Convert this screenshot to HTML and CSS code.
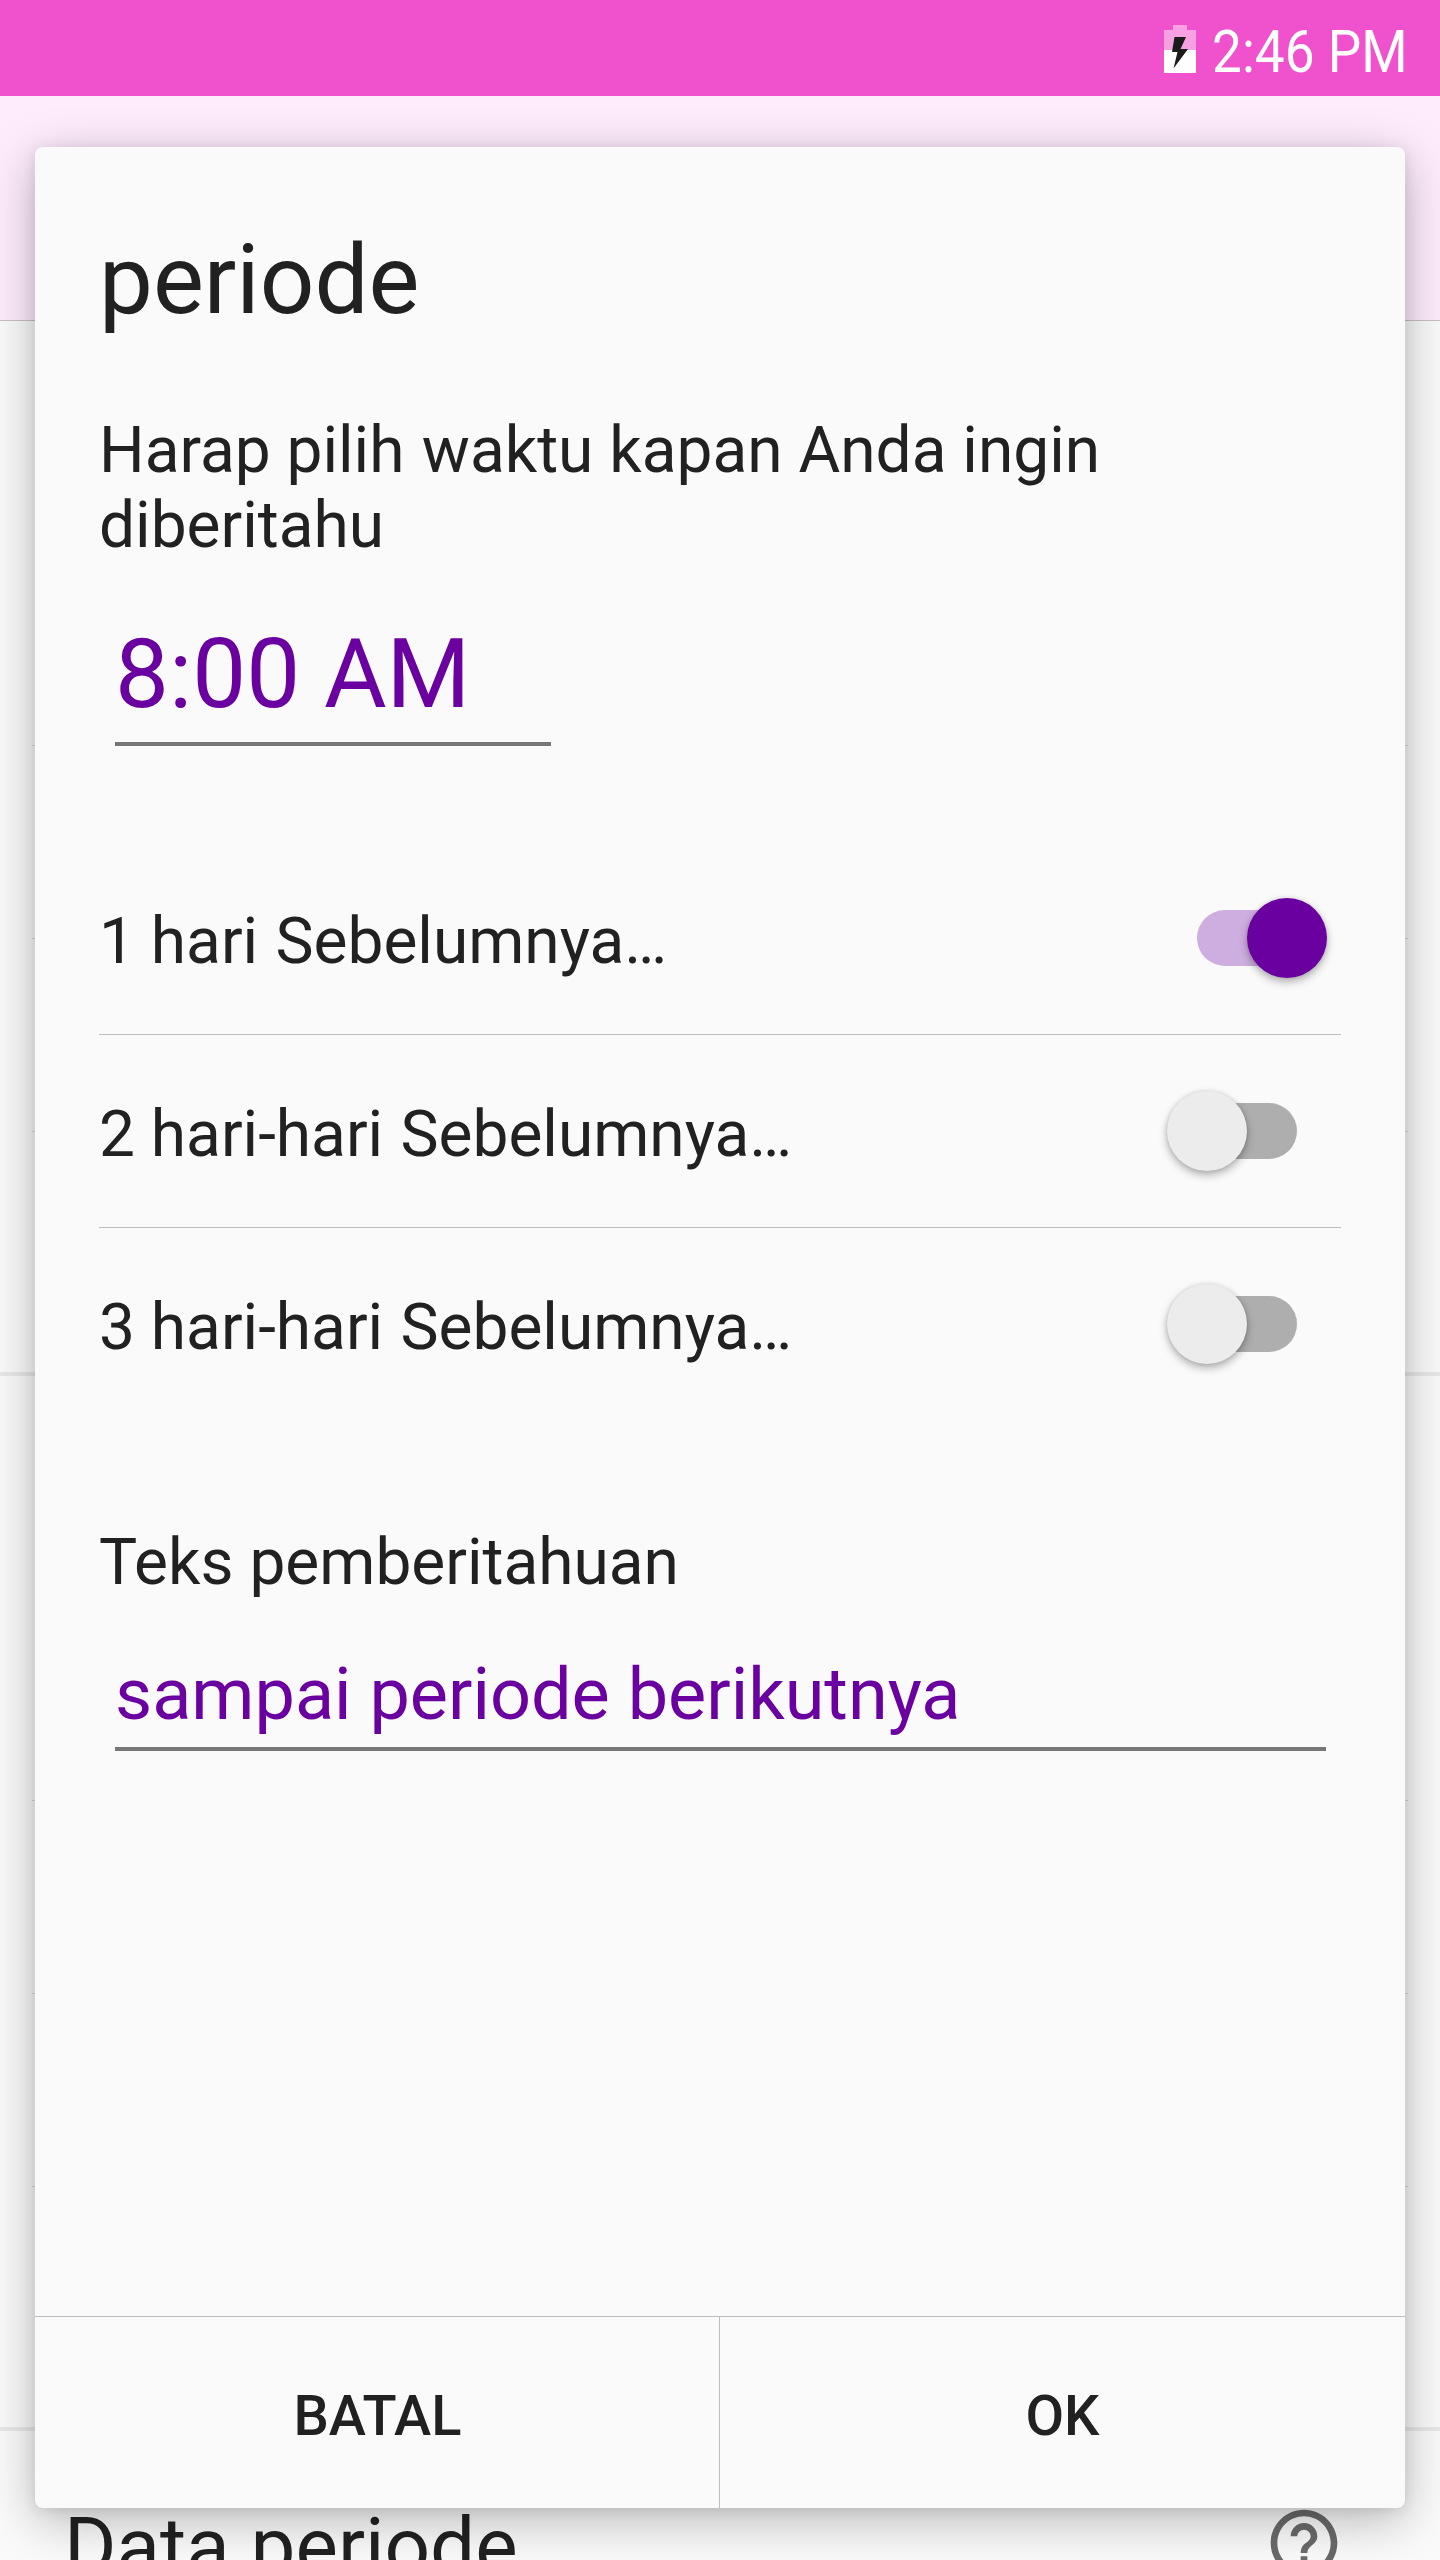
FILE: index.html
```html
<!DOCTYPE html>
<html lang="id">
<head>
<meta charset="utf-8">
<title>periode</title>
<link rel="stylesheet" href="styles.css">
</head>
<body>
<div class="screen">
  <header class="status-bar">
    <svg class="battery" width="32" height="48" viewBox="0 0 32 48">
      <path d="M9 0h14v5h9v20H0V5h9z" fill="#f7a0e2"/>
      <path d="M0 25h32v23H0z" fill="#fff"/>
      <path d="M10.500 12h11.500l-5.500 12H24L9.500 43.500l4-16.500H8z" fill="#1b1b1b"/>
    </svg>
    <span class="clock">2:46 PM</span>
  </header>
  <div class="app-bar"></div>
  <main class="page">
    <section class="group"><i></i><i></i><i></i></section>
    <section class="group"><i></i><i></i><i></i></section>
    <section class="group-data">
      <h2 class="data-title">Data periode</h2>
      <svg class="help" width="80" height="80" viewBox="0 0 24 24" fill="#6a6a6a"><path d="M11 18h2v-2h-2v2zm1-16C6.480 2 2 6.480 2 12s4.480 10 10 10 10-4.480 10-10S17.520 2 12 2zm0 18c-4.410 0-8-3.590-8-8s3.590-8 8-8 8 3.590 8 8-3.590 8-8 8zm0-14c-2.210 0-4 1.790-4 4h2c0-1.100.9-2 2-2s2 .9 2 2c0 2-3 1.750-3 5h2c0-2.250 3-2.500 3-5 0-2.210-1.790-4-4-4z"/></svg>
    </section>
  </main>
  <div class="overlay">
    <section class="dialog">
      <div class="content">
        <h1 class="title">periode</h1>
        <p class="text">Harap pilih <span class="loose">waktu</span> kapan Anda ingin diberitahu</p>
        <div class="field field-time">8:00 AM</div>
        <div class="options">
          <div class="option"><span>1 hari <span class="loose">Sebelumnya…</span></span><span class="switch on"></span></div>
          <div class="option"><span>2 hari-hari <span class="loose">Sebelumnya…</span></span><span class="switch"></span></div>
          <div class="option"><span>3 hari-hari <span class="loose">Sebelumnya…</span></span><span class="switch"></span></div>
        </div>
        <p class="text label">Teks pemberitahuan</p>
        <div class="field field-text">sampai periode berikutnya</div>
      </div>
      <footer class="actions">
        <button class="action">BATAL</button>
        <button class="action">OK</button>
      </footer>
    </section>
  </div>
</div>
</body>
</html>
```
FILE: styles.css
```css
* { box-sizing: border-box; margin: 0; padding: 0; }
body { font-family: Roboto, sans-serif; color: #212121; background: #fafafa; }
.screen { position: relative; width: 1440px; height: 2560px; overflow: hidden; display: flex; flex-direction: column; background: #fafafa; }
.status-bar { flex: none; position: relative; z-index: 2; height: 96px; background: #f052ce; display: flex; justify-content: flex-end; align-items: flex-start; padding-top: 25px; }
.battery { flex: none; margin-right: 16px; }
.clock { width: 228px; height: 70px; font-size: 60px; line-height: 54px; color: #fff; white-space: nowrap; transform: scaleX(.886); transform-origin: 0 0; }
.app-bar { flex: none; height: 225px; background: #feecfd; border-bottom: 1px solid #c9bec8; }
.page { flex: 1; min-height: 0; display: flex; flex-direction: column; }
.group { flex: none; height: 1055px; padding: 424px 32px 0; border-bottom: 4px solid #e8e8e8; }
.group i { display: block; height: 193px; border-top: 1px solid #d8d8d8; }
.group-data { display: flex; justify-content: space-between; padding: 72px 96px 0 64px; }
.data-title { font-size: 80px; font-weight: 400; line-height: 94px; margin-top: -3px; word-spacing: 1px; }
.overlay { position: absolute; inset: 0; padding: 147px 35px 52px; display: flex; }
.dialog { flex: 1; display: flex; flex-direction: column; background: #fafafa; border-radius: 8px; box-shadow: 0 12px 50px rgba(0,0,0,.27), 0 2px 14px rgba(0,0,0,.09); }
.content { flex: 1; padding: 77px 64px 0; }
.title { font-size: 96px; font-weight: 400; line-height: 112px; }
.text { font-size: 64px; line-height: 75px; margin-top: 77px; }
.loose { margin-left: 1.5px; }
.field { margin-left: 16px; color: #6a00a0; border-bottom: 4px solid #777; white-space: nowrap; }
.field-time { width: 436px; height: 128px; margin-top: 55px; font-size: 96px; line-height: 112px; }
.field-text { width: 1211px; height: 98px; margin-top: 53px; font-size: 72px; line-height: 84px; }
.options { margin-top: 96px; }
.option { height: 193px; display: flex; align-items: center; justify-content: space-between; border-bottom: 1px solid #bdbdbd; font-size: 64px; line-height: 75px; }
.option > span:first-child { padding-top: 6px; }
.option:last-child { border-bottom-color: transparent; }
.switch { position: relative; width: 100px; height: 56px; border-radius: 28px; background: #aeaeae; margin-right: 44px; }
.switch::after { content: ""; position: absolute; top: -12px; left: -30px; width: 80px; height: 80px; border-radius: 50%; background: #ececec; box-shadow: 0 4px 8px rgba(0,0,0,.3), 0 0 4px rgba(0,0,0,.1); }
.switch.on { background: #ceaee0; }
.switch.on::after { left: 50px; background: #6a00a0; }
.label { margin-top: 104px; }
.actions { flex: none; height: 192px; display: grid; grid-template-columns: 1fr 1fr; border-top: 1px solid #bdbdbd; }
.action { border: 0; background: none; font: 500 56px/66px Roboto, sans-serif; color: #212121; padding-top: 6px; }
.action:first-child { border-right: 1px solid #bdbdbd; padding-left: 1px; }
```
